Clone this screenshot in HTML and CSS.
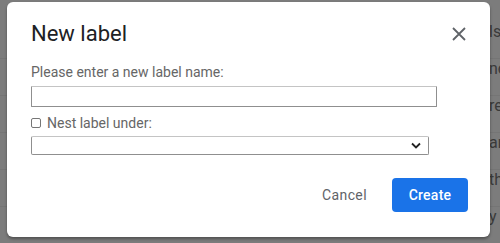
FILE: index.html
```html
<!DOCTYPE html>
<html>
<head>
<meta charset="utf-8">
<link rel="stylesheet" href="styles.css">
</head>
<body>
<div class="backdrop">
  <div class="bg-row">ls</div>
  <div class="bg-row">nc</div>
  <div class="bg-row">re</div>
  <div class="bg-row">ar</div>
  <div class="bg-row">th</div>
  <div class="bg-row">y</div>
</div>
<div class="dialog">
  <div class="header">
    <div class="title">New label</div>
    <svg class="close" width="14" height="14" viewBox="0 0 14 14"><path d="M1 1L13 13M13 1L1 13" stroke="#5f6368" stroke-width="1.8" fill="none"/></svg>
  </div>
  <div class="label">Please enter a new label name:</div>
  <input class="name-input" type="text">
  <label class="nest"><span class="box"></span>Nest label under:</label>
  <div class="select"><svg width="10" height="7" viewBox="0 0 10 7"><path d="M1 1.5L5 5.5L9 1.5" stroke="#222" stroke-width="1.8" fill="none"/></svg></div>
  <div class="actions">
    <span class="cancel">Cancel</span>
    <span class="create">Create</span>
  </div>
</div>
</body>
</html>
```
FILE: styles.css
```css
html, body {
  margin: 0;
  padding: 0;
}
body {
  width: 500px;
  height: 243px;
  overflow: hidden;
  background: #7c7c7c;
  font-family: Roboto, "Liberation Sans", sans-serif;
  position: relative;
}
.backdrop {
  padding-top: 22px;
}
.bg-row {
  height: 37px;
  padding-left: 489px;
  font-size: 16px;
  line-height: 20px;
  color: #3a3a3a;
  white-space: nowrap;
  border-bottom: 1px solid #757575;
  box-sizing: border-box;
}
.dialog {
  position: absolute;
  left: 7px;
  top: 2px;
  width: 483px;
  height: 235px;
  box-sizing: border-box;
  background: #fff;
  border-radius: 6px;
  box-shadow: 0 2px 3px rgba(0,0,0,0.35);
  padding: 18px 24px 0 24px;
  display: flex;
  flex-direction: column;
  align-items: flex-start;
}
.header {
  align-self: stretch;
  display: flex;
  justify-content: space-between;
  align-items: center;
  height: 28px;
}
.title {
  font-size: 22px;
  line-height: 28px;
  color: #202124;
}
.close {
  display: block;
}
.label {
  margin-top: 14px;
  font-size: 14px;
  line-height: 20px;
  color: #666;
}
.name-input {
  margin: 4px 0 0 0;
  width: 406px;
  height: 21px;
  box-sizing: border-box;
  border: 1px solid #8f8f8f;
  border-top-color: #c4c4c4;
  border-radius: 1px;
  padding: 0;
  outline: none;
}
.nest {
  margin-top: 7px;
  display: flex;
  align-items: center;
  font-size: 14px;
  line-height: 18px;
  color: #666;
}
.box {
  width: 8px;
  height: 8px;
  border: 1px solid #767676;
  border-radius: 2px;
  margin-right: 6px;
}
.select {
  margin-top: 4px;
  width: 398px;
  height: 19px;
  box-sizing: border-box;
  border: 1px solid #8f8f8f;
  border-top-color: #c4c4c4;
  border-radius: 2px;
  display: flex;
  align-items: center;
  justify-content: flex-end;
  padding-right: 7px;
}
.select svg {
  display: block;
}
.actions {
  align-self: stretch;
  margin-top: 23px;
  margin-right: -2px;
  display: flex;
  justify-content: flex-end;
  align-items: center;
}
.cancel {
  font-size: 14px;
  letter-spacing: 0.4px;
  color: #5f6368;
  margin-right: 25px;
}
.create {
  width: 76px;
  height: 34px;
  box-sizing: border-box;
  background: #1a73e8;
  border-radius: 4px;
  color: #fff;
  font-size: 14px;
  font-weight: 500;
  letter-spacing: 0.25px;
  display: flex;
  align-items: center;
  justify-content: center;
}
```
